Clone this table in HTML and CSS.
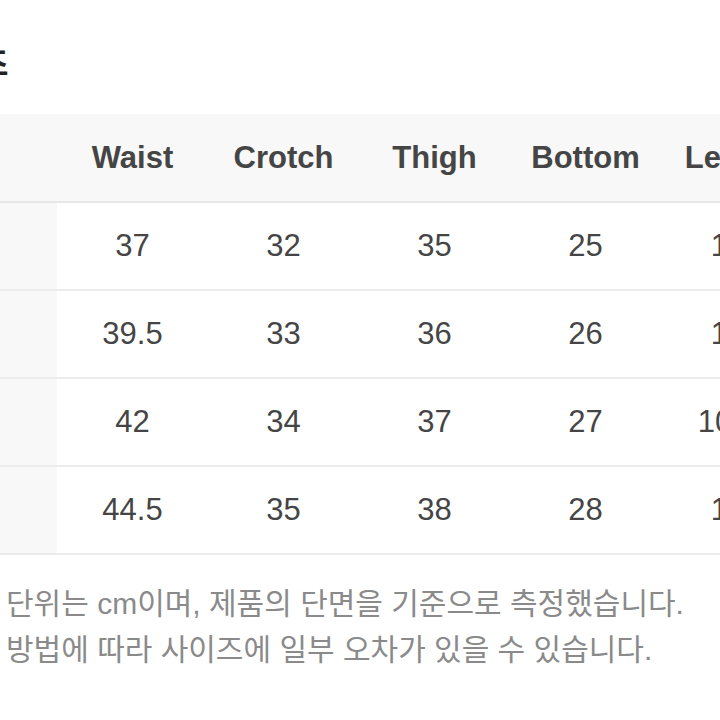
FILE: index.html
```html
<!DOCTYPE html>
<html lang="ko">
<head>
<meta charset="utf-8">
<title>사이즈</title>
<link rel="stylesheet" href="styles.css">
</head>
<body>
<div class="page">
  <h2 class="title">사이즈</h2>
  <table class="size-table">
    <thead>
      <tr>
        <th class="label-col"></th>
        <th>Waist</th>
        <th>Crotch</th>
        <th>Thigh</th>
        <th>Bottom</th>
        <th>Length</th>
      </tr>
    </thead>
    <tbody>
      <tr><td class="label-col"></td><td>37</td><td>32</td><td>35</td><td>25</td><td>101</td></tr>
      <tr><td class="label-col"></td><td>39.5</td><td>33</td><td>36</td><td>26</td><td>102</td></tr>
      <tr><td class="label-col"></td><td>42</td><td>34</td><td>37</td><td>27</td><td>103.5</td></tr>
      <tr><td class="label-col"></td><td>44.5</td><td>35</td><td>38</td><td>28</td><td>104</td></tr>
    </tbody>
  </table>
  <div class="notes">
    <p>단위는 cm이며, 제품의 단면을 기준으로 측정했습니다.</p>
    <p>방법에 따라 사이즈에 일부 오차가 있을 수 있습니다.</p>
  </div>
</div>
</body>
</html>
```

FILE: styles.css
```css
html, body {
  margin: 0;
  padding: 0;
  background: #ffffff;
  overflow: hidden;
}

body {
  width: 720px;
  height: 720px;
  font-family: "Liberation Sans", "Noto Sans CJK KR", sans-serif;
}

.page {
  margin-left: -94px;
  width: 906px;
}

.title {
  margin: 0;
  padding: 42px 0 0 14px;
  height: 114px;
  box-sizing: border-box;
  font-family: "Noto Sans CJK KR", sans-serif;
  font-size: 32px;
  font-weight: 700;
  line-height: 38px;
  color: #222222;
  white-space: nowrap;
}

.size-table {
  border-collapse: collapse;
  table-layout: fixed;
  width: 906px;
}

.size-table th,
.size-table td {
  width: 151px;
  padding: 0;
  text-align: center;
  vertical-align: middle;
  color: #454545;
  font-size: 31px;
  white-space: nowrap;
}

.size-table thead tr {
  background: #f8f8f8;
}

.size-table th {
  height: 87px;
  font-weight: 700;
  border-bottom: 2px solid #e7e7e7;
}

.size-table td {
  height: 86px;
  font-weight: 400;
  border-bottom: 2px solid #ececec;
}

.size-table td.label-col {
  background: #f8f8f8;
}

.notes {
  padding: 26px 0 0 94px;
  margin-left: 6px;
}

.notes p {
  margin: 0;
  font-family: "Liberation Sans", "Noto Sans CJK KR", sans-serif;
  font-size: 30px;
  line-height: 46px;
  color: #8a8a8a;
  white-space: nowrap;
}
```
